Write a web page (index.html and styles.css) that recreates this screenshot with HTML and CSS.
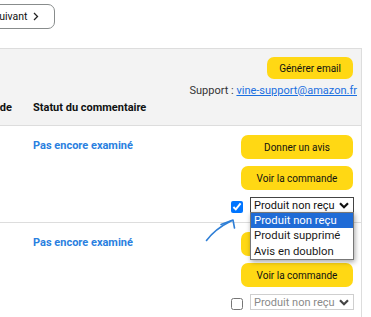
FILE: index.html
```html
<!DOCTYPE html>
<html lang="fr">
<head>
  <meta charset="UTF-8">
  <meta name="viewport" content="width=device-width, initial-scale=1.0">
  <title>Vine - Commandes</title>
  <link rel="stylesheet" href="styles.css">
</head>
<body>

<div class="page">
  <div class="pager">
    <button class="pager-btn">Suivant
      <svg class="pager-chev" viewBox="0 0 6 9" width="6" height="9"><polyline points="1,1 4.5,4.5 1,8" fill="none" stroke="#222" stroke-width="1.3"/></svg>
    </button>
  </div>

  <div class="orders">
    <!-- En-tête du tableau -->
    <div class="row head">
      <div class="cell c1"><span class="th">Période</span></div>
      <div class="cell c2"><span class="th">Statut du commentaire</span></div>
      <div class="cell c3">
        <button class="btn">Générer email</button>
        <div class="support">Support : <a href="#">vine-support@amazon.fr</a></div>
      </div>
    </div>

    <!-- Ligne 1 -->
    <div class="row">
      <div class="cell c1"></div>
      <div class="cell c2"><span class="status">Pas encore examiné</span></div>
      <div class="cell c3">
        <button class="btn">Donner un avis</button>
        <button class="btn">Voir la commande</button>
        <div class="report">
          <input type="checkbox" class="check" checked>
          <div class="select">
            <span class="select-value">Produit non reçu</span>
            <svg class="select-chev" viewBox="0 0 10 7" width="10" height="7"><polyline points="1,1.2 5,5.2 9,1.2" fill="none" stroke="#111" stroke-width="2.2"/></svg>
            <ul class="select-menu">
              <li class="active">Produit non reçu</li>
              <li>Produit supprimé</li>
              <li>Avis en doublon</li>
            </ul>
          </div>
        </div>
      </div>
    </div>

    <!-- Ligne 2 -->
    <div class="row">
      <div class="cell c1"></div>
      <div class="cell c2"><span class="status">Pas encore examiné</span></div>
      <div class="cell c3">
        <button class="btn">Donner un avis</button>
        <button class="btn">Voir la commande</button>
        <div class="report">
          <input type="checkbox" class="check">
          <div class="select disabled">
            <span class="select-value">Produit non reçu</span>
            <svg class="select-chev" viewBox="0 0 10 7" width="10" height="7"><polyline points="1,1.2 5,5.2 9,1.2" fill="none" stroke="#444" stroke-width="2.2"/></svg>
          </div>
        </div>
      </div>
    </div>
  </div>

  <!-- flèche dessinée à la main -->
  <svg class="annotation" viewBox="0 0 40 40" width="40" height="40">
    <path d="M6.5 35.5 C 12 28, 19 22, 31 16" fill="none" stroke="#2f7fd6" stroke-width="1.6" stroke-linecap="round"/>
    <path d="M21 19.5 L 33 15 L 34.5 23" fill="none" stroke="#2f7fd6" stroke-width="1.6" stroke-linecap="round" stroke-linejoin="round"/>
  </svg>
</div>

</body>
</html>
```

FILE: styles.css
```css
body {
  margin: 0;
  font-family: Roboto, "Liberation Sans", sans-serif;
  font-size: 11px;
  color: #0f1111;
  background: #fff;
}

.page {
  position: relative;
  width: 371px;
  height: 317px;
  overflow: hidden;
}

.pager {
  height: 48px;
  padding-top: 4px;
  box-sizing: border-box;
}

.pager-btn {
  display: inline-flex;
  align-items: center;
  gap: 5px;
  margin-left: -24px;
  height: 25px;
  padding: 0 15px 0 16px;
  background: #fff;
  border: 1px solid #888c8c;
  border-radius: 7px;
  font-family: inherit;
  font-size: 10.5px;
  color: #0f1111;
}

.orders {
  margin-left: -100px;
  width: 461px;
  border-top: 1px solid #dddddd;
  border-right: 1px solid #dddddd;
}

.row {
  display: grid;
  grid-template-columns: 121px 169px 171px;
  border-bottom: 1px solid #dddddd;
}

.row.head {
  background: #f3f3f3;
  height: 77px;
  box-sizing: border-box;
}

.cell.c2 {
  padding: 12px 0 0 12px;
}

.head .c1,
.head .c2 {
  align-self: end;
  padding: 0 0 10px 0;
  line-height: 14px;
}

.head .c1 {
  text-align: right;
  padding-right: 9px;
}

.head .c2 {
  padding-left: 12px;
}

.th {
  font-weight: bold;
}

.cell.c3 {
  display: flex;
  flex-direction: column;
  align-items: flex-end;
  gap: 7px;
  padding: 9px 8px 9px 0;
}

.head .c3 {
  gap: 0;
  padding-top: 8px;
}

.btn {
  min-width: 112px;
  height: 24px;
  padding: 0 10px;
  background: #ffd814;
  border: none;
  border-radius: 7px;
  font-family: inherit;
  font-size: 10px;
  color: #0f1111;
}

.head .btn {
  min-width: 0;
  height: 22px;
  padding: 0 12px;
}

.support {
  margin-top: 5px;
  margin-right: -4px;
  white-space: nowrap;
  line-height: 14px;
  font-size: 11px;
  color: #333;
}

.support a {
  color: #1a6fe0;
}

.status {
  font-weight: bold;
  color: #2a7fe0;
  line-height: 16px;
}

.report {
  display: flex;
  align-items: center;
  gap: 7px;
  margin-right: -1px;
}

.check {
  width: 12px;
  height: 12px;
  margin: 3px 0 0 0;
}

.select {
  position: relative;
  display: flex;
  align-items: center;
  justify-content: space-between;
  width: 104px;
  height: 16px;
  box-sizing: border-box;
  padding: 0 4px 0 3px;
  border: 1px solid #444;
  background: #fff;
  font-size: 11px;
  color: #111;
}

.select.disabled {
  border-color: #cfcfcf;
  color: #8a8a8a;
}

.select-value {
  white-space: nowrap;
}

.select-menu {
  position: absolute;
  top: 14px;
  left: -1px;
  width: 104px;
  margin: 0;
  padding: 0;
  list-style: none;
  background: #fff;
  border: 1px solid #777;
  box-sizing: border-box;
  box-shadow: 1px 2px 5px rgba(0, 0, 0, 0.35);
  z-index: 2;
}

.select-menu li {
  height: 15.3px;
  line-height: 15.3px;
  padding-left: 3px;
  font-size: 11.3px;
  color: #1a1a1a;
}

.select-menu li.active {
  background: #1f6bd6;
  color: #fff;
}

.annotation {
  position: absolute;
  left: 200px;
  top: 205px;
}
```
